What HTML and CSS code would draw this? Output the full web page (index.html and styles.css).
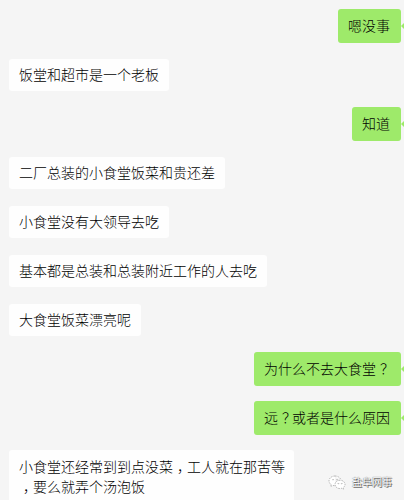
FILE: index.html
```html
<!doctype html>
<html lang="zh-CN">
   <head>
      <meta charset="utf-8">
      <title>聊天</title>
      <link rel="stylesheet" href="styles.css">
   </head>
   <body>
      <main class="chat">
         <div class="row me"><p class="bubble">嗯没事</p></div>
         <div class="row"><p class="bubble">饭堂和超市是一个老板</p></div>
         <div class="row me"><p class="bubble">知道</p></div>
         <div class="row"><p class="bubble">二厂总装的小食堂饭菜和贵还差</p></div>
         <div class="row"><p class="bubble">小食堂没有大领导去吃</p></div>
         <div class="row"><p class="bubble">基本都是总装和总装附近工作的人去吃</p></div>
         <div class="row"><p class="bubble">大食堂饭菜漂亮呢</p></div>
         <div class="row me"><p class="bubble">为什么不去大食堂<span class="mark">？</span></p></div>
         <div class="row me"><p class="bubble">远<span class="mark">？</span>或者是什么原因</p></div>
         <div class="row"><p class="bubble long">小食堂还经常到到点没菜<span class="mark">，</span>工人就在那苦等<br><span class="mark">，</span>要么就弄个汤泡饭</p></div>
      </main>

      <div class="watermark">
         <svg class="logo" width="18" height="15" viewBox="0 0 18 15">
            <path d="M7 1C3.700 1 1 3.200 1 5.900c0 1.500.8 2.800 2.100 3.700l-.5 1.900 2.100-1.100c.8.200 1.500.3 2.300.3"/>
            <path d="M7 1c3 0 5.300 1.700 5.900 4"/>
            <path d="M12 5.200c-2.800 0-5 1.900-5 4.200s2.200 4.200 5 4.200c.6 0 1.200-.1 1.700-.3l1.800.9-.4-1.500c1.200-.8 1.900-1.900 1.900-3.300 0-2.300-2.200-4.200-5-4.200z"/>
            <circle cx="5" cy="4.500" r=".5"/>
            <circle cx="9" cy="4.500" r=".5"/>
            <circle cx="10.300" cy="8.300" r=".5"/>
            <circle cx="13.700" cy="8.300" r=".5"/>
         </svg>
         <span>盐阜网事</span>
      </div>
   </body>
</html>
```

FILE: styles.css
```css
* {
   margin: 0;
   padding: 0;
   box-sizing: border-box;
}

body {
   height: 500px;
   background: #f5f5f5;
   color: #000;
   font-family: "Noto Sans CJK SC", sans-serif;
   font-size: 14px;
   font-weight: 300;
   line-height: 20px;
   overflow: hidden;
}

.chat {
   display: flex;
   flex-direction: column;
   gap: 15px;
   padding: 9px 3px 0 9px;
}

.row {
   display: flex;
   align-items: center;
   min-height: 34px;
}

.bubble {
   padding: 5px 10px 7px;
   background: #fefefe;
   border-radius: 3px;
   white-space: nowrap;
}

/* Own messages */
.me {
   justify-content: flex-end;
}

.me .bubble {
   position: relative;
   padding: 6px 11px 8px 10px;
   background: #9eea6a;
}

/* Bubble tail */
.me .bubble::after {
   content: "";
   position: absolute;
   top: 12px;
   right: -5px;
   border: 5px solid transparent;
   border-left: 0;
   border-right: 5px solid #9eea6a;
}

.long {
   width: 285px;
   padding: 6px 10px 8px;
}

/* Half-width punctuation centered in a full cell */
.mark {
   display: inline-block;
   width: 7px;
   margin: 0 3px 0 4px;
   font-feature-settings: "halt";
}

/* Account watermark */
.watermark {
   position: absolute;
   left: 328px;
   top: 474px;
   display: flex;
   align-items: center;
   gap: 6px;
   height: 16px;
   color: #fff;
   font-size: 10px;
   font-weight: 400;
   line-height: 16px;
   text-shadow: 0 0 1px #333, 1px 1px 0 #777;
   white-space: nowrap;
}

.logo {
   fill: #fff;
   stroke: #999;
   stroke-width: .7;
   stroke-dasharray: 1.5 1;
}
```
